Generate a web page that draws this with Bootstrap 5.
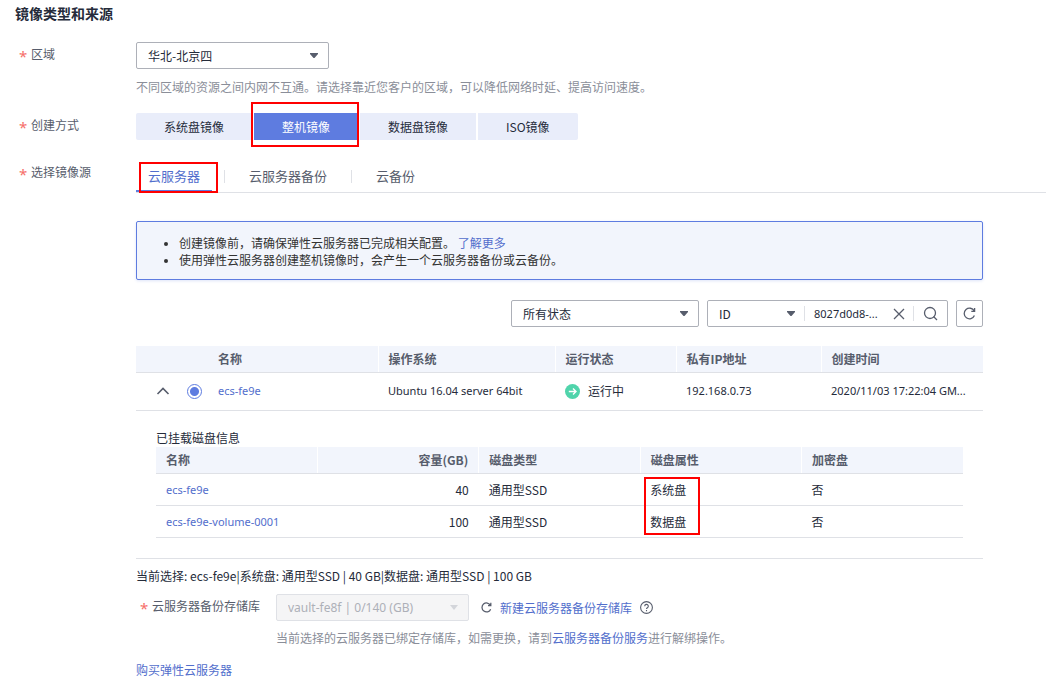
<!DOCTYPE html>
<html lang="zh-CN">
<head>
<meta charset="utf-8">
<meta name="viewport" content="width=device-width, initial-scale=1">
<title>创建镜像</title>
<link href="https://cdn.jsdelivr.net/npm/bootstrap@5.3.0/dist/css/bootstrap.min.css" rel="stylesheet">
<style>
:root{--ink:#252b3a;--label:#575d6c;--hint:#8a8e99;--brand:#526ecc;--primary:#5e7ce0;--line:#dfe1e6;--edge:#adb0b8;--tint:#f2f5fc}
body{font-family:"Noto Sans CJK SC","Noto Sans",sans-serif;font-size:12px;line-height:18px;color:var(--ink);background:#fff}
a{color:var(--brand);text-decoration:none}
.page-form{padding:3px 0 0 15px}
.page-title{font-size:14px;line-height:20px;font-weight:700}
.field-label{flex:0 0 121px;padding:3px 0 0 16px;position:relative;color:var(--label)}
.need::before{content:"*";position:absolute;left:4px;top:5px;color:#f66f6a;font-family:"Noto Sans",sans-serif;font-size:15px}
.hint{color:var(--hint)}
.latin{font-family:"Noto Sans",sans-serif;font-size:11px}
.pick{font-size:12px;line-height:17px;height:27px;border:1px solid var(--edge);border-radius:2px;padding:0 28px 0 11px;color:var(--ink);background-color:#fff;background-image:url("data:image/svg+xml,%3Csvg xmlns='http://www.w3.org/2000/svg' viewBox='0 0 8 5'%3E%3Cpath d='M0 0h8v1L4.500 5h-1L0 1z' fill='%23575d6c'/%3E%3C/svg%3E");background-size:8px 5px;background-position:right 10px center}
.pick-md{width:193px}
.pick-state{width:188px}
.pick-key{width:96px;height:25px;border:0;padding-right:20px;background-position:right 9px center}
.pick:disabled{background-color:#f5f5f6;border-color:var(--line);color:var(--edge);background-image:url("data:image/svg+xml,%3Csvg xmlns='http://www.w3.org/2000/svg' viewBox='0 0 8 5'%3E%3Cpath d='M0 0h8L4 5z' fill='%23d3d5da'/%3E%3C/svg%3E")}
.mode-btn{font-size:12px;line-height:27px;padding:0 28px;border:0;border-radius:0;background:#e9edfa;color:var(--ink)}
.mode-btn.active,.mode-btn.btn.active{background:var(--primary);color:#fff}
.mode-btn:first-child{border-radius:2px 0 0 2px}
.mode-btn:last-child{border-radius:0 2px 2px 0}
.callout{position:absolute;border:2px solid #f00;pointer-events:none;z-index:2}
.callout-mode{inset:-11px -1px -7px -3px}
.callout-tab{inset:1px -6px -3px 3px}
.callout-disk{left:4px;top:3px;width:56px;height:58px}
.source-tabs{border-bottom:1px solid var(--line)}
.source-tab{font-size:13px;line-height:18px;padding:5px 12px;border:0;border-bottom:2px solid transparent;border-radius:0;background:none;color:var(--label);height:31px}
.source-tab.active{color:var(--brand);border-color:var(--primary)}
.tab-rule{width:1px;height:13px;background:var(--line);margin:0 12px}
.panel{padding-right:63px}
.note-box{background:var(--tint);border:1px solid var(--primary);border-radius:2px;padding:12px 0 11px;margin:28px 0 20px;color:#333;box-shadow:0 1px 3px #5e7ce033}
.note-box ul{padding-left:42px;line-height:17px}
.note-box li::marker{font-family:"Noto Sans",sans-serif}
.search-box{border:1px solid var(--edge);border-radius:2px;height:27px;width:241px}
.search-box input{width:80px;border:0;padding:0 0 0 9px;outline:0;color:var(--ink);background:none}
.rule-v{width:1px;height:15px;background:var(--line)}
.icon-btn{border:0;background:none;padding:0;color:var(--label);display:flex;align-items:center;justify-content:center}
.icon-btn.boxed{border:1px solid var(--edge);border-radius:2px;width:27px;height:27px}
.grid-table{width:100%;table-layout:fixed;margin:0}
.grid-table th{height:26px;padding:0 10px;background:var(--tint);color:var(--label);font-weight:700;border-bottom:1px solid var(--line);border-right:1px solid #fff}
.grid-table th:last-child,.grid-table th.plain{border-right:0}
.grid-table td{padding:0 10px;border-bottom:1px solid var(--line);height:38px}
.grid-table .disk-table th{height:27px}
.grid-table .disk-table td{height:32px}
.grid-table td.nest{padding:18px 20px 20px}
.c-open{width:41px}.c-radio{width:31px}.c-name{width:170px}.c-os{width:177px}.c-state{width:121px}.c-ip{width:145px}
.dot-radio{appearance:none;width:15px;height:15px;margin:0;border:1px solid var(--primary);border-radius:50%;display:block;background:#fff}
.dot-radio:checked{background:radial-gradient(circle,var(--primary) 4px,#fff 5px)}
</style>
</head>
<body>
<form class="page-form">
  <h1 class="page-title mb-0">镜像类型和来源</h1>

  <div class="d-flex" style="padding-top:19px">
    <label class="field-label need" for="region">区域</label>
    <div class="flex-grow-1">
      <select id="region" class="form-select pick pick-md"><option>华北-北京四</option></select>
      <p class="hint mb-0" style="padding-top:9px">不同区域的资源之间内网不互通。请选择靠近您客户的区域，可以降低网络时延、提高访问速度。</p>
    </div>
  </div>

  <div class="d-flex" style="padding-top:17px">
    <div class="field-label need" id="mode">创建方式</div>
    <div class="d-flex" style="gap:2px" role="group" aria-labelledby="mode">
      <button type="button" class="btn mode-btn">系统盘镜像</button>
      <button type="button" class="btn mode-btn active position-relative">整机镜像<span class="callout callout-mode"></span></button>
      <button type="button" class="btn mode-btn">数据盘镜像</button>
      <button type="button" class="btn mode-btn">ISO镜像</button>
    </div>
  </div>

  <div class="d-flex" style="margin-top:20px">
    <div class="field-label need" id="source">选择镜像源</div>
    <div class="flex-grow-1">
      <div class="source-tabs d-flex align-items-center" style="padding-top:1px" role="tablist" aria-labelledby="source">
        <button type="button" role="tab" class="source-tab active position-relative">云服务器<span class="callout callout-tab"></span></button>
        <span class="tab-rule"></span>
        <button type="button" role="tab" class="source-tab">云服务器备份</button>
        <span class="tab-rule"></span>
        <button type="button" role="tab" class="source-tab">云备份</button>
      </div>

      <div class="panel">
        <div class="note-box">
          <ul class="mb-0">
            <li>创建镜像前，请确保弹性云服务器已完成相关配置。 <a href="#">了解更多</a></li>
            <li>使用弹性云服务器创建整机镜像时，会产生一个云服务器备份或云备份。</li>
          </ul>
        </div>

        <div class="d-flex justify-content-end gap-2">
          <select class="form-select pick pick-state" aria-label="状态"><option>所有状态</option></select>
          <div class="search-box d-flex align-items-center">
            <select class="form-select pick pick-key" aria-label="搜索字段"><option>ID</option></select>
            <span class="rule-v"></span>
            <input type="text" class="latin" value="8027d0d8-..." aria-label="搜索内容">
            <button type="button" class="icon-btn flex-grow-1" aria-label="清除"><svg width="12" height="12" viewBox="0 0 12 12" fill="none" stroke="currentColor" stroke-width="1.300"><path d="M1 1l10 10M11 1L1 11"/></svg></button>
            <span class="rule-v"></span>
            <button type="button" class="icon-btn" style="width:33px" aria-label="搜索"><svg width="15" height="15" viewBox="0 0 15 15" fill="none" stroke="currentColor" stroke-width="1.300"><circle cx="7" cy="7" r="5.500"/><path d="M10.500 10.500L14 14"/></svg></button>
          </div>
          <button type="button" class="icon-btn boxed" aria-label="刷新"><svg width="13" height="13" viewBox="0 0 13 13" fill="none" stroke="currentColor" stroke-width="1.300"><path d="M11.400 8.500A5.300 5.300 0 1 1 11.200 4M11.600 1v3.400H8.300"/></svg></button>
        </div>

        <table class="grid-table" style="margin-top:19px">
          <colgroup><col class="c-open"><col class="c-radio"><col class="c-name"><col class="c-os"><col class="c-state"><col class="c-ip"><col></colgroup>
          <thead><tr><th class="plain"></th><th class="plain"></th><th>名称</th><th>操作系统</th><th>运行状态</th><th>私有IP地址</th><th>创建时间</th></tr></thead>
          <tbody>
            <tr>
              <td class="pe-0 ps-3"><button type="button" class="icon-btn ps-1" aria-label="收起"><svg width="14" height="8" viewBox="0 0 14 8" fill="none" stroke="currentColor" stroke-width="1.600"><path d="M1.500 7L7 1.500 12.500 7"/></svg></button></td>
              <td><input type="radio" name="server" class="dot-radio" checked aria-label="ecs-fe9e"></td>
              <td class="latin"><a href="#">ecs-fe9e</a></td>
              <td class="latin">Ubuntu 16.04 server 64bit</td>
              <td><span class="d-flex align-items-center"><svg class="me-2" width="15" height="15" viewBox="0 0 15 15"><circle cx="7.500" cy="7.500" r="7.500" fill="#50d4ab"/><path d="M3.800 7.500h7M8 4.500l3 3-3 3" fill="none" stroke="#fff" stroke-width="1.400"/></svg>运行中</span></td>
              <td class="latin">192.168.0.73</td>
              <td class="latin text-nowrap">2020/11/03 17:22:04 GM...</td>
            </tr>
            <tr>
              <td class="nest" colspan="7">
                <div id="disks">已挂载磁盘信息</div>
                <table class="grid-table disk-table" aria-labelledby="disks">
                  <thead><tr><th>名称</th><th class="text-end">容量(GB)</th><th>磁盘类型</th><th>磁盘属性</th><th>加密盘</th></tr></thead>
                  <tbody>
                    <tr><td class="latin"><a href="#">ecs-fe9e</a></td><td class="text-end">40</td><td>通用型SSD</td><td class="position-relative">系统盘<span class="callout callout-disk"></span></td><td>否</td></tr>
                    <tr><td class="latin"><a href="#">ecs-fe9e-volume-0001</a></td><td class="text-end">100</td><td>通用型SSD</td><td>数据盘</td><td>否</td></tr>
                  </tbody>
                </table>
              </td>
            </tr>
          </tbody>
        </table>

        <p class="mb-0 mt-2">当前选择: ecs-fe9e|系统盘: 通用型SSD | 40 GB|数据盘: 通用型SSD | 100 GB</p>
        <div class="d-flex" style="padding-top:9px">
          <label class="field-label need text-nowrap" style="flex-basis:140px" for="vault">云服务器备份存储库</label>
          <div>
            <div class="d-flex align-items-center">
              <select id="vault" class="form-select pick pick-md latin" disabled><option>vault-fe8f | 0/140 (GB)</option></select>
              <button type="button" class="icon-btn mx-2 ps-1" aria-label="刷新存储库"><svg width="11" height="11" viewBox="0 0 13 13" fill="none" stroke="currentColor" stroke-width="1.500"><path d="M11.400 8.500A5.300 5.300 0 1 1 11.200 4M11.600 1v3.400H8.300"/></svg></button>
              <a href="#">新建云服务器备份存储库</a>
              <button type="button" class="icon-btn ms-2" aria-label="帮助"><svg width="13" height="13" viewBox="0 0 13 13" fill="none" stroke="currentColor" stroke-width="1.100"><circle cx="6.500" cy="6.500" r="5.900"/><path d="M4.700 5.200a1.800 1.800 0 1 1 2.700 1.500c-.6.400-.9.700-.9 1.300M6.500 9v1.200"/></svg></button>
            </div>
            <p class="hint mb-0 mt-2">当前选择的云服务器已绑定存储库，如需更换，请到<a href="#">云服务器备份服务</a>进行解绑操作。</p>
          </div>
        </div>
        <p class="mb-0" style="margin-top:14px"><a href="#">购买弹性云服务器</a></p>
      </div>
    </div>
  </div>
</form>
<script src="https://cdn.jsdelivr.net/npm/bootstrap@5.3.0/dist/js/bootstrap.bundle.min.js"></script>
</body>
</html>
